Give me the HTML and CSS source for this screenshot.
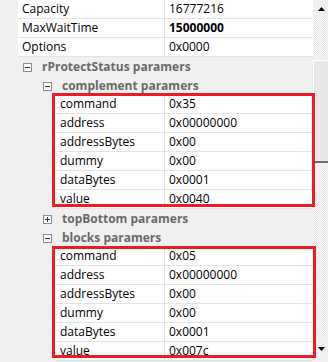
FILE: index.html
```html
<!DOCTYPE html>
<html>
  <head>
    <meta charset="UTF-8">
    <title>Property grid</title>
    <link rel="stylesheet" href="styles.css">
  </head>
  <body>
    <div class="grid">
      <div class="rows">
        <div class="row prop">
          <div class="margin"></div>
          <div class="name">Capacity</div>
          <div class="value">16777216</div>
        </div>
        <div class="row prop">
          <div class="margin"></div>
          <div class="name">MaxWaitTime</div>
          <div class="value bold">15000000</div>
        </div>
        <div class="row prop">
          <div class="margin"></div>
          <div class="name">Options</div>
          <div class="value">0x0000</div>
        </div>

        <div class="row cat lvl1">
          <svg class="toggle" width="9" height="9" viewBox="0 0 9 9"><rect x="0.5" y="0.5" width="8" height="8" fill="#fff" stroke="#8e8e8e"/><path d="M2 4.5h5" stroke="#333"/></svg>
          <span>rProtectStatus paramers</span>
        </div>
        <div class="row cat lvl2">
          <svg class="toggle" width="9" height="9" viewBox="0 0 9 9"><rect x="0.5" y="0.5" width="8" height="8" fill="#fff" stroke="#8e8e8e"/><path d="M2 4.5h5" stroke="#333"/></svg>
          <span>complement paramers</span>
        </div>

        <div class="group group-a">
          <div class="row prop nested">
            <div class="margin"></div>
            <div class="name">command</div>
            <div class="value">0x35</div>
          </div>
          <div class="row prop nested">
            <div class="margin"></div>
            <div class="name">address</div>
            <div class="value">0x00000000</div>
          </div>
          <div class="row prop nested">
            <div class="margin"></div>
            <div class="name">addressBytes</div>
            <div class="value">0x00</div>
          </div>
          <div class="row prop nested">
            <div class="margin"></div>
            <div class="name">dummy</div>
            <div class="value">0x00</div>
          </div>
          <div class="row prop nested">
            <div class="margin"></div>
            <div class="name">dataBytes</div>
            <div class="value">0x0001</div>
          </div>
          <div class="row prop nested">
            <div class="margin"></div>
            <div class="name">value</div>
            <div class="value">0x0040</div>
          </div>
        </div>

        <div class="row cat lvl2">
          <svg class="toggle" width="9" height="9" viewBox="0 0 9 9"><rect x="0.5" y="0.5" width="8" height="8" fill="#fff" stroke="#8e8e8e"/><path d="M2 4.5h5M4.5 2v5" stroke="#333"/></svg>
          <span>topBottom paramers</span>
        </div>
        <div class="row cat lvl2">
          <svg class="toggle" width="9" height="9" viewBox="0 0 9 9"><rect x="0.5" y="0.5" width="8" height="8" fill="#fff" stroke="#8e8e8e"/><path d="M2 4.5h5" stroke="#333"/></svg>
          <span>blocks paramers</span>
        </div>

        <div class="group group-b">
          <div class="row prop nested">
            <div class="margin"></div>
            <div class="name">command</div>
            <div class="value">0x05</div>
          </div>
          <div class="row prop nested">
            <div class="margin"></div>
            <div class="name">address</div>
            <div class="value">0x00000000</div>
          </div>
          <div class="row prop nested">
            <div class="margin"></div>
            <div class="name">addressBytes</div>
            <div class="value">0x00</div>
          </div>
          <div class="row prop nested">
            <div class="margin"></div>
            <div class="name">dummy</div>
            <div class="value">0x00</div>
          </div>
          <div class="row prop nested">
            <div class="margin"></div>
            <div class="name">dataBytes</div>
            <div class="value">0x0001</div>
          </div>
          <div class="row prop nested">
            <div class="margin"></div>
            <div class="name">value</div>
            <div class="value">0x007c</div>
          </div>
        </div>
      </div>

      <div class="scrollbar">
        <div class="arrow up"><svg width="7" height="4" viewBox="0 0 7 4"><path d="M0 4h7L3.5 0z" fill="#000"/></svg></div>
        <div class="track">
          <div class="thumb"></div>
        </div>
        <div class="arrow down"><svg width="7" height="4" viewBox="0 0 7 4"><path d="M0 0h7L3.5 4z" fill="#000"/></svg></div>
      </div>
    </div>
  </body>
</html>
```

FILE: styles.css
```css
* {
  box-sizing: border-box;
}

body {
  margin: 0;
  background: #f0f0f0;
  font-family: 'Open Sans', 'Noto Sans', sans-serif;
  font-size: 12px;
  color: #000;
}

.grid {
  display: flex;
  width: 328px;
  height: 362px;
  overflow: hidden;
}

.rows {
  display: flex;
  flex-direction: column;
  width: 313px;
  flex: none;
}

.row {
  display: flex;
  height: 19px;
  flex: none;
  line-height: 18px;
  white-space: nowrap;
}

/* property rows */
.prop .margin {
  width: 18px;
  flex: none;
}

.prop.nested .margin {
  width: 55px;
}

.prop .name {
  width: 147px;
  flex: none;
  padding-left: 4px;
  background: #fff;
  border-bottom: 1px solid #e3e3e3;
  border-right: 1px solid #e3e3e3;
}

.prop.nested .name {
  width: 110px;
  padding-left: 5px;
}

.prop .value {
  flex: 1;
  padding-left: 4px;
  background: #fff;
  border-bottom: 1px solid #e3e3e3;
}

.bold {
  font-weight: bold;
}

/* category rows */
.cat {
  align-items: center;
  gap: 10px;
  color: #6a6a6a;
  font-weight: bold;
}

.cat.lvl1 {
  padding-left: 23px;
}

.cat.lvl2 {
  padding-left: 43px;
}

.toggle {
  display: block;
  flex: none;
  margin-top: 1px;
}

/* red highlight boxes */
.group {
  position: relative;
}

.group::after {
  content: '';
  position: absolute;
  left: 52px;
  border: 3px solid #ed1c24;
  pointer-events: none;
}

.group-a::after {
  top: -2px;
  right: -2px;
  bottom: 2px;
}

.group-b::after {
  top: -1px;
  right: -3px;
  bottom: 3px;
}

/* scrollbar */
.scrollbar {
  display: flex;
  flex-direction: column;
  width: 15px;
  flex: none;
}

.arrow {
  height: 17px;
  flex: none;
  display: flex;
  align-items: center;
  justify-content: center;
  background: #f0f0f0;
  padding-left: 2px;
}

.track {
  flex: 1;
  padding-top: 43px;
  background: repeating-conic-gradient(#fafafa 0 25%, #e6e6e6 0 50%) 0 0 / 2px 2px;
}

.thumb {
  height: 103px;
  background: #e8e8e8;
  border-top: 1px solid #fff;
  border-left: 1px solid #fff;
  border-bottom: 2px solid #6c6c6c;
}

.arrow.down {
  height: 21px;
  align-items: flex-start;
  padding-top: 6px;
}
```
